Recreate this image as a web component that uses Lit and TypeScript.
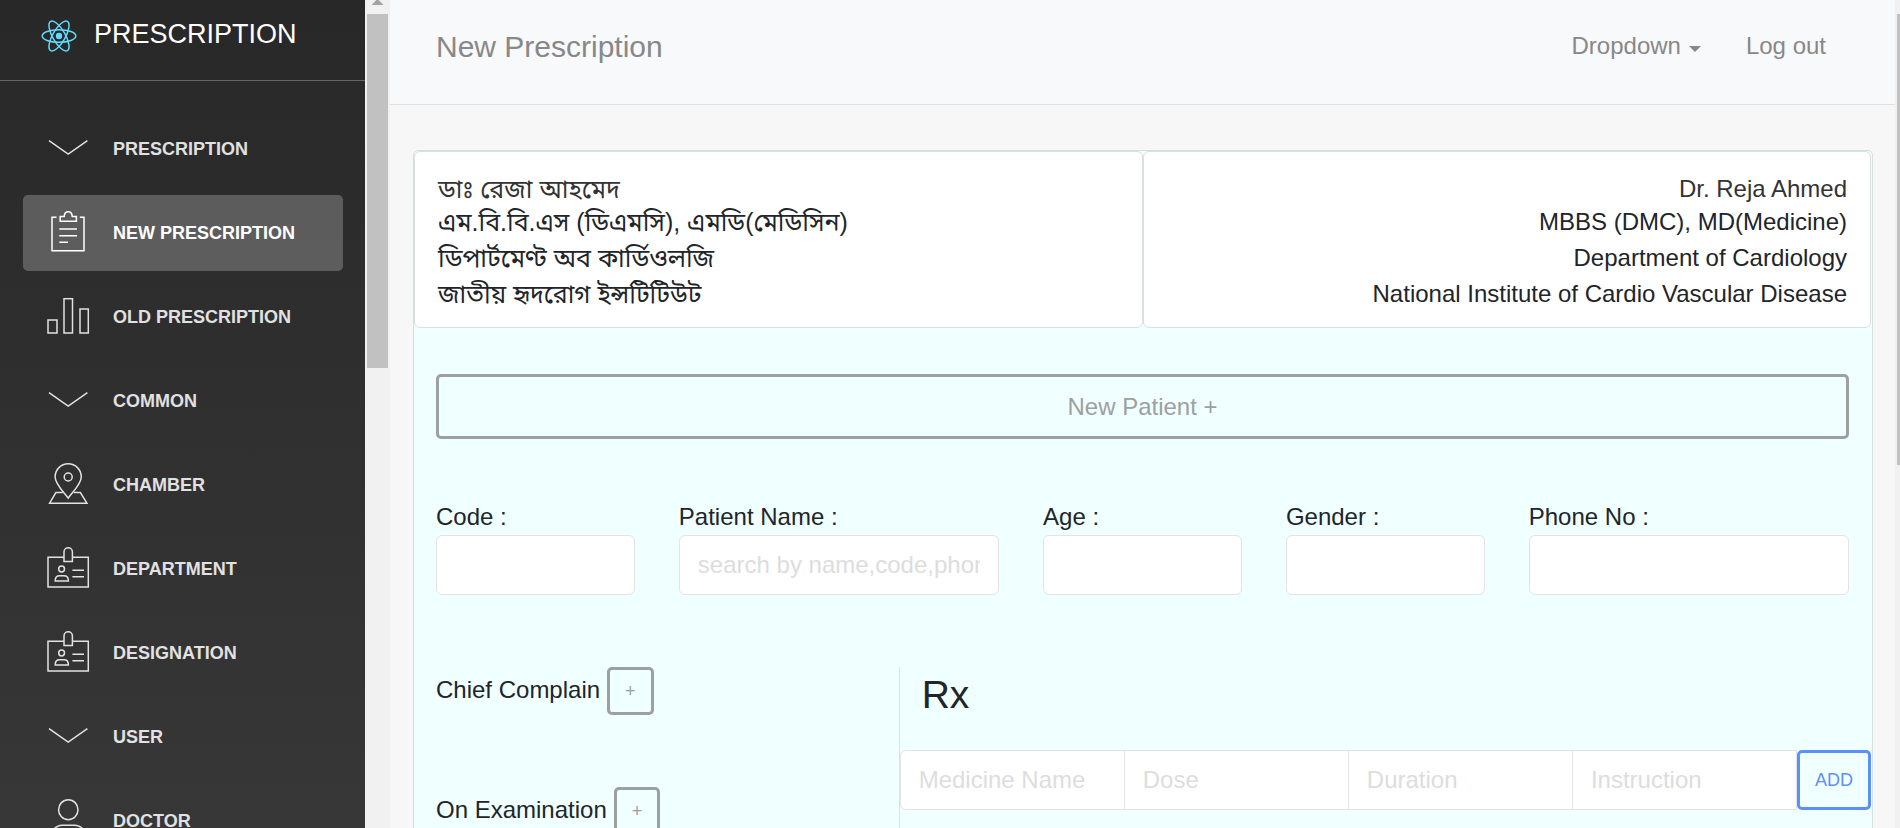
import { LitElement, html, css, svg } from "lit";
import { customElement, property, state } from "lit/decorators.js";
import { classMap } from "lit/directives/class-map.js";

const icons = {
  chevron: svg`<path d="M4 14.7 23.2 28 42.4 14.7" />`,
  clipboard: svg`
    <path d="M11.5 7.3H7V40.8H39V7.3H34.8" />
    <path d="M15.2 6.4H19.2C19.6 .2 26.9 .2 27.2 6.4H31.4V11.2H15.2Z" />
    <path d="M14.3 19H32M14.3 25.7H32M14.3 32.3H23" />`,
  chart: svg`
    <rect x="3" y="26" width="9" height="13" />
    <rect x="19" y="4.7" width="8.5" height="34.3" />
    <rect x="35" y="15" width="8.3" height="24" />`,
  pin: svg`
    <path d="M17.8 30.5H10.9L4.6 41.2H41.9L35.4 30.5H28.8" />
    <path d="M23.2 36.2C19.5 30.8 10.1 22.4 10.1 14.8a13.1 13 0 0 1 26.2 0C36.3 22.4 26.8 30.8 23.2 36.2Z" />
    <circle cx="23.2" cy="15" r="4" />`,
  badge: svg`
    <path d="M19 11.2H3V41H43.3V11.2H27.4" />
    <path d="M19 15.4V5.9a4.2 4.2 0 0 1 8.4 0V15.4Z" />
    <circle cx="16.6" cy="23" r="2.9" />
    <path d="M10.2 35c0-3.2 1.8-5.2 4.4-5.2h4.4c2.6 0 4.4 2 4.4 5.2Z" />
    <path d="M27.4 24.3H39M27.4 30.7H39" />`,
  user: svg`
    <ellipse cx="23.3" cy="11.7" rx="9.7" ry="10" />
    <path d="M5 43C5 33 11 27.2 17 27.2H29.6C36 27.2 42 33 42 43Z" />`,
};

type IconName = keyof typeof icons;

interface NavItem {
  label: string;
  icon: IconName;
}

const NAV: NavItem[] = [
  { label: "Prescription", icon: "chevron" },
  { label: "New Prescription", icon: "clipboard" },
  { label: "Old Prescription", icon: "chart" },
  { label: "Common", icon: "chevron" },
  { label: "Chamber", icon: "pin" },
  { label: "Department", icon: "badge" },
  { label: "Designation", icon: "badge" },
  { label: "User", icon: "chevron" },
  { label: "Doctor", icon: "user" },
];

@customElement("side-bar")
class SideBar extends LitElement {
  @property() active = "";

  static styles = css`
    :host {
      display: flex;
      flex: none;
      min-height: 0;
      overflow: hidden;
    }
    .panel {
      width: 365px;
      overflow: hidden;
      background: linear-gradient(#282828, #373737);
      color: #fff;
    }
    .logo {
      display: flex;
      align-items: center;
      gap: 16px;
      height: 81px;
      box-sizing: border-box;
      padding: 0 40px 12px;
      border-bottom: 1px solid #666;
      font-size: 27px;
      line-height: 46px;
      text-transform: uppercase;
      text-decoration: none;
      color: #fff;
    }
    .mark {
      flex: none;
      width: 38px;
      height: 38px;
      margin-top: 3px;
      fill: none;
      stroke: #61dafb;
    }
    .mark circle {
      fill: #61dafb;
      stroke: none;
    }
    nav {
      display: flex;
      flex-direction: column;
      gap: 8px;
      padding: 30px 22px 0 23px;
    }
    .item {
      display: flex;
      align-items: center;
      gap: 22px;
      height: 76px;
      box-sizing: border-box;
      padding: 0 22px;
      border-radius: 5px;
      font-size: 18px;
      font-weight: bold;
      line-height: 45px;
      text-transform: uppercase;
      text-decoration: none;
      color: #fff;
    }
    .item > * {
      opacity: 0.86;
    }
    .item.active {
      background: rgba(255, 255, 255, 0.23);
    }
    .item.active > * {
      opacity: 1;
    }
    .icon {
      flex: none;
      width: 46px;
      height: 46px;
      fill: none;
      stroke: #fff;
      stroke-width: 1.5;
    }
    .track {
      width: 25px;
      background: #f1f1f1;
    }
    .arrow {
      display: block;
      width: 12px;
      height: 6px;
      margin: 0 auto 8px;
      background: #a3a3a3;
      clip-path: polygon(40% 0, 60% 0, 100% 83%, 0 83%);
    }
    .thumb {
      height: 354px;
      margin: 0 2px;
      background: #c1c1c1;
    }
  `;

  render() {
    return html`
      <aside class="panel">
        <a class="logo" href="#">
          <svg class="mark" viewBox="-19 -19 38 38" stroke-width="1.5" aria-hidden="true">
            <circle r="3.2" />
            <ellipse rx="16.8" ry="6.3" />
            <ellipse rx="16.8" ry="6.3" transform="rotate(60)" />
            <ellipse rx="16.8" ry="6.3" transform="rotate(120)" />
          </svg>
          <span>Prescription</span>
        </a>
        <nav>
          ${NAV.map(
            (item) => html`
              <a class=${classMap({ item: true, active: item.label === this.active })} href="#">
                <svg class="icon" viewBox="0 0 46 46" aria-hidden="true">${icons[item.icon]}</svg>
                <span>${item.label}</span>
              </a>
            `
          )}
        </nav>
      </aside>
      <div class="track" aria-hidden="true">
        <span class="arrow"></span>
        <div class="thumb"></div>
      </div>
    `;
  }
}

@customElement("top-bar")
class TopBar extends LitElement {
  @property() heading = "";

  static styles = css`
    :host {
      display: flex;
      flex: none;
      align-items: center;
      justify-content: space-between;
      height: 105px;
      box-sizing: border-box;
      padding: 0 69px 12px 46px;
      border-bottom: 1px solid #dee0e2;
      background: #f8f9fb;
      color: #888;
    }
    .title {
      font-size: 30px;
      line-height: 45px;
      color: inherit;
      text-decoration: none;
    }
    .links {
      display: flex;
      align-items: center;
      gap: 45px;
      font-size: 24px;
      line-height: 36px;
    }
    .links button,
    .links a {
      padding: 0;
      border: 0;
      background: none;
      font: inherit;
      color: inherit;
      text-decoration: none;
    }
    .links button {
      display: flex;
      align-items: center;
      gap: 8px;
    }
    .caret {
      border: 6px solid transparent;
      border-top-color: currentColor;
      border-bottom: 0;
      margin-top: 5px;
    }
  `;

  render() {
    return html`
      <a class="title" href="#">${this.heading}</a>
      <div class="links">
        <button type="button" aria-haspopup="true">Dropdown<span class="caret"></span></button>
        <a href="#">Log out</a>
      </div>
    `;
  }
}

interface Field {
  id: string;
  label: string;
  placeholder?: string;
}

const FIELDS: Field[] = [
  { id: "code", label: "Code :" },
  { id: "name", label: "Patient Name :", placeholder: "search by name,code,phone" },
  { id: "age", label: "Age :" },
  { id: "gender", label: "Gender :" },
  { id: "phone", label: "Phone No :" },
];

const NOTES = ["Chief Complain", "On Examination"];
const MEDICINE = ["Medicine Name", "Dose", "Duration", "Instruction"];

@customElement("prescription-form")
class PrescriptionForm extends LitElement {
  static styles = css`
    :host {
      display: block;
      margin: 45px 22px 0 23px;
      border: 1px solid #d2e0de;
      border-radius: 5px;
      padding-right: 1px;
      background: #f0ffff;
      color: #212529;
      font-size: 24px;
      line-height: 36px;
    }
    .heads {
      display: grid;
      grid-template-columns: 1fr 1fr;
    }
    .head {
      padding: 22px 23px 15px;
      border: 1px solid #d9e0df;
      border-radius: 6px;
      background: #fff;
    }
    .head h2 {
      margin: 0;
      font-size: inherit;
      font-weight: 400;
      line-height: 30px;
      color: #333;
    }
    .head p {
      margin: 0;
    }
    .bengali {
      font-size: 25px;
    }
    .right {
      text-align: right;
    }
    .new {
      padding: 46px 22px 60px;
    }
    button {
      border: 3px solid #9da0a0;
      border-radius: 5px;
      background: transparent;
      font: inherit;
      color: #9da0a0;
    }
    .wide {
      display: block;
      width: 100%;
      height: 65px;
    }
    .fields {
      display: grid;
      grid-template-columns: 2fr 3fr 2fr 2fr 3fr;
      padding-bottom: 72px;
    }
    .field {
      min-width: 0;
      padding: 0 22px;
    }
    label {
      display: block;
    }
    input {
      display: block;
      width: 100%;
      min-width: 0;
      height: 60px;
      box-sizing: border-box;
      padding: 0 18px;
      border: 1px solid #e3e3e3;
      border-radius: 6px;
      background: #fff;
      font: inherit;
      color: #565656;
    }
    input::placeholder {
      color: #ddd;
      opacity: 1;
    }
    .columns {
      display: grid;
      grid-template-columns: 1fr 2fr;
    }
    .notes {
      display: flex;
      flex-direction: column;
      gap: 72px;
      padding: 0 22px 72px;
    }
    .note {
      display: flex;
      align-items: flex-start;
      gap: 7px;
      line-height: 46px;
    }
    .note button {
      height: 48px;
      padding: 0 15px;
      font-size: 18px;
      line-height: 27px;
    }
    .rx {
      margin-left: -1px;
      border-left: 1px solid #dee2e6;
      min-width: 0;
    }
    .rx h3 {
      margin: 0;
      padding: 4px 22px 32px;
      font-size: 39px;
      font-weight: 400;
      line-height: 47px;
    }
    .medicine {
      display: flex;
    }
    .medicine input {
      flex: 1;
      border-radius: 0;
    }
    .medicine input:first-child {
      border-radius: 6px 0 0 6px;
    }
    .medicine input + input {
      margin-left: -1px;
    }
    .medicine button {
      flex: none;
      padding: 0 15px;
      border-color: #5b8ff9;
      font-size: 18px;
      color: #5b8ff9;
    }
  `;

  render() {
    return html`
      <section class="heads">
        <div class="head bengali" lang="bn">
          <h2>ডাঃ রেজা আহমেদ</h2>
          <p>এম.বি.বি.এস (ডিএমসি), এমডি(মেডিসিন)</p>
          <p>ডিপার্টমেণ্ট অব কার্ডিওলজি</p>
          <p>জাতীয় হৃদরোগ ইন্সটিটিউট</p>
        </div>
        <div class="head right">
          <h2>Dr. Reja Ahmed</h2>
          <p>MBBS (DMC), MD(Medicine)</p>
          <p>Department of Cardiology</p>
          <p>National Institute of Cardio Vascular Disease</p>
        </div>
      </section>
      <div class="new"><button class="wide" type="button">New Patient +</button></div>
      <div class="fields">
        ${FIELDS.map(
          (f) => html`
            <div class="field">
              <label for=${f.id}>${f.label}</label>
              <input id=${f.id} type="text" placeholder=${f.placeholder ?? ""} />
            </div>
          `
        )}
      </div>
      <div class="columns">
        <section class="notes">
          ${NOTES.map(
            (n) => html`
              <div class="note">
                <span>${n}</span>
                <button type="button" aria-label="Add ${n}">+</button>
              </div>
            `
          )}
        </section>
        <section class="rx">
          <h3>Rx</h3>
          <div class="medicine">
            ${MEDICINE.map((m) => html`<input type="text" placeholder=${m} aria-label=${m} />`)}
            <button type="button">ADD</button>
          </div>
        </section>
      </div>
    `;
  }
}

@customElement("app-root")
class AppRoot extends LitElement {
  @state() private page = "New Prescription";

  static styles = css`
    :host {
      display: flex;
      height: 100vh;
      overflow: hidden;
      background: #f7f7f7;
      font-family: "Liberation Sans", Arial, "Noto Sans Bengali", sans-serif;
    }
    main {
      display: flex;
      flex: 1;
      flex-direction: column;
      min-width: 0;
    }
    .track {
      flex: none;
      width: 5px;
      padding: 14px 0 0 2px;
      box-sizing: border-box;
      background: #f1f1f1;
    }
    .thumb {
      height: 451px;
      background: #c1c1c1;
    }
  `;

  render() {
    return html`
      <side-bar active=${this.page}></side-bar>
      <main>
        <top-bar heading=${this.page}></top-bar>
        <prescription-form></prescription-form>
      </main>
      <div class="track" aria-hidden="true"><div class="thumb"></div></div>
    `;
  }
}
